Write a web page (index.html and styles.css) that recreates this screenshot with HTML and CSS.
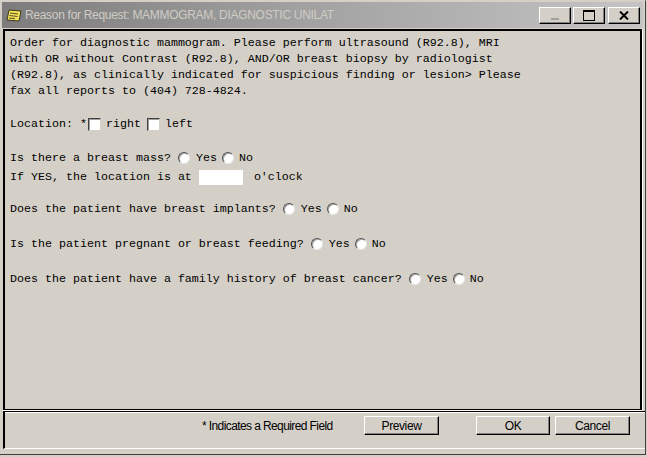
FILE: index.html
```html
<!DOCTYPE html>
<html>
<head>
<meta charset="utf-8">
<link rel="stylesheet" href="styles.css">
</head>
<body>
<div class="window">
  <div class="titlebar">
    <svg class="ticon" width="16" height="14" viewBox="0 0 16 14">
      <polygon points="3,1 15,2 13,12 1,11" fill="#f4e35a" stroke="#3a3a1a" stroke-width="1"/>
      <line x1="4" y1="4" x2="12" y2="5" stroke="#5a5020" stroke-width="1"/>
      <line x1="3.5" y1="6.5" x2="11.5" y2="7.5" stroke="#5a5020" stroke-width="1"/>
      <line x1="3" y1="9" x2="9" y2="9.6" stroke="#5a5020" stroke-width="1"/>
    </svg>
    <span class="ttext">Reason for Request: MAMMOGRAM, DIAGNOSTIC UNILAT</span>
    <div class="tbtns">
      <span class="tbtn"><span class="min"></span></span>
      <span class="tbtn"><span class="max"></span></span>
      <span class="tbtn close"><svg width="10" height="9" viewBox="0 0 10 9"><path d="M1 0.5 L9 8.5 M9 0.5 L1 8.5" stroke="#000" stroke-width="2"/></svg></span>
    </div>
  </div>
  <div class="content">
    <div class="para">Order for diagnostic mammogram. Please perform ultrasound (R92.8), MRI<br>with OR without Contrast (R92.8), AND/OR breast biopsy by radiologist<br>(R92.8), as clinically indicated for suspicious finding or lesion&gt; Please<br>fax all reports to (404) 728-4824.</div>
    <div class="row r-loc"><span>Location: *</span><span class="chk"></span><span class="lbl-c">right</span><span class="chk"></span><span class="lbl-c">left</span></div>
    <div class="row r-mass"><span>Is there a breast mass?</span><span class="radio"></span><span>Yes</span><span class="radio r2"></span><span>No</span></div>
    <div class="row r-yes"><span>If YES, the location is at </span><span class="tinput"></span><span>o'clock</span></div>
    <div class="row r-q"><span>Does the patient have breast implants?</span><span class="radio"></span><span>Yes</span><span class="radio r2"></span><span>No</span></div>
    <div class="row r-q2"><span>Is the patient pregnant or breast feeding?</span><span class="radio"></span><span>Yes</span><span class="radio r2"></span><span>No</span></div>
    <div class="row r-q2"><span>Does the patient have a family history of breast cancer?</span><span class="radio"></span><span>Yes</span><span class="radio r2"></span><span>No</span></div>
  </div>
  <div class="footer">
    <span class="req">* Indicates a Required Field</span>
    <span class="btn b-prev">Preview</span>
    <span class="btn b-ok">OK</span>
    <span class="btn b-cancel">Cancel</span>
  </div>
</div>
</body>
</html>
```
FILE: styles.css
```css
html, body { margin: 0; padding: 0; }
body { background: #d4d0c8; width: 647px; height: 457px; overflow: hidden; }
.window {
  width: 646px; height: 455px; box-sizing: border-box;
  background: #d4d0c8;
  border-top: 1px solid #d4d0c8;
  border-right: 1px solid #404040;
  border-bottom: 1px solid #404040;
  display: flex; flex-direction: column;
}
.titlebar {
  height: 26px; margin: 1px 2px 0 2px;
  background: linear-gradient(to right, #7c7c7c 0%, #a0a0a0 45%, #c4c4c4 100%);
  display: flex; align-items: center;
  font-family: "Liberation Sans", Arial, sans-serif; font-size: 12px; color: #d0ccc4;
}
.ticon { margin-left: 4px; margin-right: 3px; margin-top: 1px; }
.ttext { flex: 1; white-space: nowrap; letter-spacing: -0.3px; }
.tbtns { display: flex; margin-right: 3px; }
.tbtn {
  width: 30px; height: 15px; box-sizing: content-box;
  background: #d4d0c8;
  border-top: 1px solid #fff; border-left: 1px solid #fff;
  border-right: 1px solid #000; border-bottom: 1px solid #000;
  box-shadow: inset -1px -1px #808080;
  display: flex; align-items: center; justify-content: center;
  margin-left: 2px;
}
.tbtn.close { margin-left: 3px; }
.min { width: 8px; height: 2px; background: #a0a0a0; margin-top: 8px; }
.max { width: 10px; height: 8px; border: 1px solid #000; border-top-width: 2px; }
.content {
  margin: 1px 3px 0 3px; height: 381px; box-sizing: border-box;
  border-top: 2px solid #000; border-left: 2px solid #000;
  border-right: 2px solid #000; border-bottom: 1px solid #000;
  box-shadow: 1px 0 #fff, 0 1px #fff;
  padding: 4px 0 0 5px;
  font-family: "Liberation Mono", "Courier New", monospace; font-size: 11.67px; color: #000;
}
.para { line-height: 16px; white-space: nowrap; }
.row { display: flex; align-items: center; height: 16px; white-space: pre; }
.r-loc { margin-top: 17px; }
.r-mass { margin-top: 18px; }
.r-yes { margin-top: 3px; }
.r-q { margin-top: 16px; }
.r-q2 { margin-top: 19px; }
.chk {
  width: 11px; height: 11px; background: #fff;
  border-top: 1px solid #404040; border-left: 1px solid #404040;
  border-right: 1px solid #d4d0c8; border-bottom: 1px solid #d4d0c8;
  box-shadow: inset 1px 1px #a0a0a0;
  margin-left: 1px;
}
.lbl-c { margin-left: 5px; margin-right: 5px; }
.radio {
  width: 10px; height: 10px; border-radius: 50%; background: #fff;
  border: 1px solid; border-color: #505050 #e8e8e8 #e8e8e8 #505050;
  box-shadow: inset 1px 1px #a8a8a8;
  margin-left: 7px; margin-right: 6px;
}
.radio.r2 { margin-left: 5px; margin-right: 5px; }
.tinput { width: 44px; height: 15px; background: #fff; margin-right: 11px; }
.footer {
  margin: 1px 0 0 3px; height: 38px; box-sizing: border-box;
  border-top: 1px solid #000; border-left: 2px solid #000;
  border-bottom: 1px solid #fff;
  box-shadow: inset 0 1px #fff;
  display: flex; align-items: flex-start;
  font-family: "Liberation Sans", Arial, sans-serif; font-size: 12px; color: #000;
  padding-left: 197px; padding-top: 4px;
}
.req { letter-spacing: -0.6px; width: 162px; white-space: nowrap; line-height: 19px; margin-top: 1px; }
.btn {
  height: 17px; box-sizing: content-box;
  background: #d4d0c8;
  border-top: 1px solid #fff; border-left: 1px solid #fff;
  border-right: 1px solid #000; border-bottom: 1px solid #000;
  box-shadow: inset -1px -1px #808080;
  display: flex; align-items: center; justify-content: center;
  letter-spacing: -0.4px;
}
.b-prev { width: 73px; }
.b-ok { width: 72px; margin-left: 37px; }
.b-cancel { width: 73px; margin-left: 5px; }
```
